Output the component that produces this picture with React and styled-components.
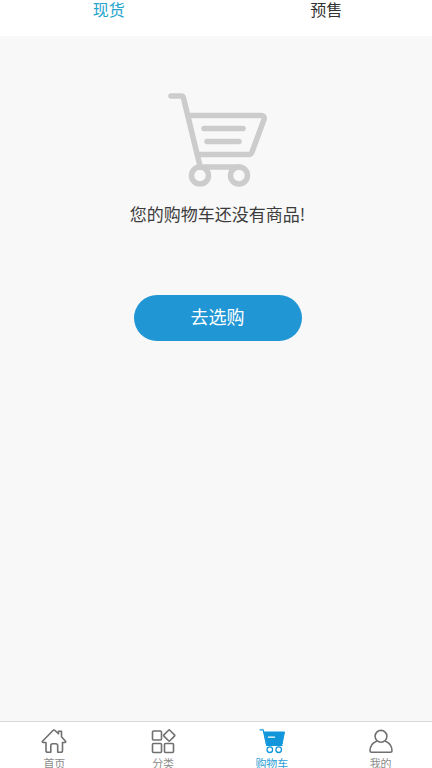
import { useState } from "react";
import styled, { createGlobalStyle } from "styled-components";

const tabs = ["现货", "预售"];

const links = [
  { label: "首页", Icon: HomeIcon },
  { label: "分类", Icon: CategoryIcon },
  { label: "购物车", Icon: CartIcon, active: true },
  { label: "我的", Icon: UserIcon },
];

export default function App() {
  const [current, setCurrent] = useState(tabs[0]);

  return (
    <>
      <GlobalStyle />
      <Page>
        <Tabs>
          {tabs.map((tab) => (
            <Tab
              key={tab}
              type="button"
              $active={tab === current}
              onClick={() => setCurrent(tab)}
            >
              {tab}
            </Tab>
          ))}
        </Tabs>
        <Empty>
          <EmptyCart />
          <Message>您的购物车还没有商品!</Message>
          <ShopButton type="button">去选购</ShopButton>
        </Empty>
        <NavBar>
          {links.map(({ label, Icon, active }) => (
            <NavLink key={label} href="#" $active={active}>
              <Icon />
              <NavLabel $active={active}>{label}</NavLabel>
            </NavLink>
          ))}
        </NavBar>
      </Page>
    </>
  );
}

function EmptyCart() {
  return (
    <CartDrawing viewBox="1 0 100 96" aria-hidden="true">
      <path d="M4 4h10.500q1.500 0 2 2L33 74M21 23.500h73q4 0 3 4L85 60q-1 2.500-3 2.500H31" />
      <path d="M37 36.500h39M40 49.500h32M34 75h38" />
      <circle cx="33" cy="83.500" r="8.500" />
      <circle cx="72" cy="83.500" r="8.500" />
    </CartDrawing>
  );
}

function HomeIcon() {
  return (
    <NavDrawing viewBox="0 0 26 26" aria-hidden="true">
      <path d="M1.500 13.200 11.700 2.700q1.300-1.300 2.600 0l3.200 3.100V3.300h3v5.500l4 4.400q.7 1.300-.7 1.300h-2.300v8q0 1.800-1.800 1.800h-3v-6.500q0-2-1.900-2h-3.100q-1.900 0-1.900 2v6.500h-3q-1.800 0-1.800-1.800v-8H2.200q-1.400 0-.7-1.300Z" />
    </NavDrawing>
  );
}

function CategoryIcon() {
  return (
    <NavDrawing viewBox="0 0 26 26" aria-hidden="true">
      <rect x="2.500" y="3" width="9" height="9" rx="1" />
      <rect x="2.500" y="15.500" width="9" height="9" rx="1" />
      <rect x="14.500" y="15.500" width="9" height="9" rx="1" />
      <path d="m18.600 2.200-4.700 4.700q-.6.600 0 1.200l4.700 4.700q.6.600 1.200 0l4.700-4.700q.6-.6 0-1.200l-4.700-4.700q-.6-.6-1.200 0Z" />
    </NavDrawing>
  );
}

function CartIcon() {
  return (
    <NavDrawing viewBox="0 0 26 26" aria-hidden="true">
      <path d="M1 1.800h3.200l3.500 15.700h15.500" strokeWidth="1.200" />
      <path
        d="M5.300 4h20.200l-2.500 12.500H8Z"
        fill="currentColor"
        strokeWidth="1"
      />
      <path d="M9.500 9.200h6" stroke="#fff" strokeWidth="1.300" />
      <circle cx="10.800" cy="21.700" r="2.800" strokeWidth="1.300" />
      <circle cx="19.700" cy="21.700" r="2.800" strokeWidth="1.300" />
    </NavDrawing>
  );
}

function UserIcon() {
  return (
    <NavDrawing viewBox="0 0 26 26" aria-hidden="true">
      <circle cx="13" cy="8.300" r="5.900" />
      <path d="M8.500 13.300C4.300 15 2 18.300 2 22.800q0 1.500 1.500 1.500h19q1.500 0 1.500-1.500c0-4.500-2.300-7.800-6.500-9.500" />
    </NavDrawing>
  );
}

const GlobalStyle = createGlobalStyle`
  * {
    box-sizing: border-box;
  }
  body {
    margin: 0;
    overflow: hidden;
    background: #f8f8f8;
    font-family: "Noto Sans CJK SC", sans-serif;
  }
`;

const Page = styled.div`
  display: flex;
  flex-direction: column;
  height: 100vh;
  margin-right: -3px;
`;

const Tabs = styled.div`
  display: flex;
  background: #fff;
`;

const Tab = styled.button`
  flex: 1;
  padding: 0 0 18px;
  border: 0;
  background: none;
  color: ${(props) => (props.$active ? "#25a5cb" : "#333")};
  font-family: inherit;
  font-size: 16px;
  line-height: 18px;
  cursor: pointer;
`;

const Empty = styled.main`
  flex: 1;
  display: flex;
  flex-direction: column;
  align-items: center;
  padding-top: 56px;
`;

const CartDrawing = styled.svg`
  width: 100px;
  height: 96px;
  fill: none;
  stroke: #ccc;
  stroke-width: 5.5;
  stroke-linecap: round;
  stroke-linejoin: round;
`;

const Message = styled.p`
  margin: 14px 0 69px;
  color: #3c3c3c;
  font-size: 17px;
  line-height: 24px;
`;

const ShopButton = styled.button`
  padding: 9px 57px 13px;
  border: 0;
  border-radius: 24px;
  background: #2196d4;
  color: #fff;
  font-family: inherit;
  font-size: 18px;
  line-height: 24px;
  cursor: pointer;
`;

const NavBar = styled.nav`
  display: flex;
  border-top: 1px solid #d8d8d8;
  background: #fff;
`;

const NavLink = styled.a`
  flex: 1;
  display: flex;
  flex-direction: column;
  align-items: center;
  padding-top: 6px;
  color: ${(props) => (props.$active ? "#1296db" : "#707070")};
  text-decoration: none;
`;

const NavDrawing = styled.svg`
  width: 26px;
  height: 26px;
  margin-bottom: 4px;
  fill: none;
  stroke: currentColor;
  stroke-width: 1.6;
  stroke-linecap: round;
  stroke-linejoin: round;
`;

const NavLabel = styled.span`
  color: ${(props) => (props.$active ? "#2f9fd6" : "#8c8c8c")};
  font-size: 11px;
  line-height: 10px;
`;
